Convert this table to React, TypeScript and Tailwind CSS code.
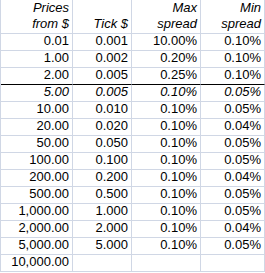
import React from "react";

type Row = { c: string[]; italic?: boolean; thick?: boolean };

const rows: Row[] = [
  { c: ["0.01", "0.001", "10.00%", "0.10%"] },
  { c: ["1.00", "0.002", "0.20%", "0.10%"] },
  { c: ["2.00", "0.005", "0.25%", "0.10%"], thick: true },
  { c: ["5.00", "0.005", "0.10%", "0.05%"], italic: true },
  { c: ["10.00", "0.010", "0.10%", "0.05%"] },
  { c: ["20.00", "0.020", "0.10%", "0.04%"] },
  { c: ["50.00", "0.050", "0.10%", "0.05%"] },
  { c: ["100.00", "0.100", "0.10%", "0.05%"] },
  { c: ["200.00", "0.200", "0.10%", "0.04%"] },
  { c: ["500.00", "0.500", "0.10%", "0.05%"] },
  { c: ["1,000.00", "1.000", "0.10%", "0.05%"] },
  { c: ["2,000.00", "2.000", "0.10%", "0.04%"] },
  { c: ["5,000.00", "5.000", "0.10%", "0.05%"] },
  { c: ["10,000.00", "", "", ""] },
];

export default function App() {
  return (
    <div
      className="w-[265px] h-[273px] bg-white text-black overflow-hidden"
      style={{ fontFamily: '"Liberation Sans", Arial, sans-serif' }}
    >
      <div className="grid grid-cols-[72px_59px_69px_64px] border-l border-[#d0d7e5] text-[13px] leading-[16px]">
        {[["Prices", "from $"], ["", "Tick $"], ["Max", "spread"], ["Min", "spread"]].map((h, i) => (
          <div
            key={i}
            className="h-[34px] border-r border-b border-[#d0d7e5] flex flex-col items-end justify-end pr-[3px] pb-px italic"
          >
            <div className="h-[17px] flex items-end">{h[0]}</div>
            <div className="h-[16px] flex items-end">{h[1]}</div>
          </div>
        ))}
        {rows.map((r, ri) =>
          r.c.map((v, ci) => (
            <div
              key={ri + "-" + ci}
              className={
                "h-[17px] border-r border-b flex items-end justify-end pr-[3px] pb-px " +
                (r.thick ? "border-b-black" : "border-b-[#d0d7e5]") +
                " border-r-[#d0d7e5]" +
                (r.italic ? " italic" : "")
              }
            >
              {v}
            </div>
          ))
        )}
      </div>
    </div>
  );
}
